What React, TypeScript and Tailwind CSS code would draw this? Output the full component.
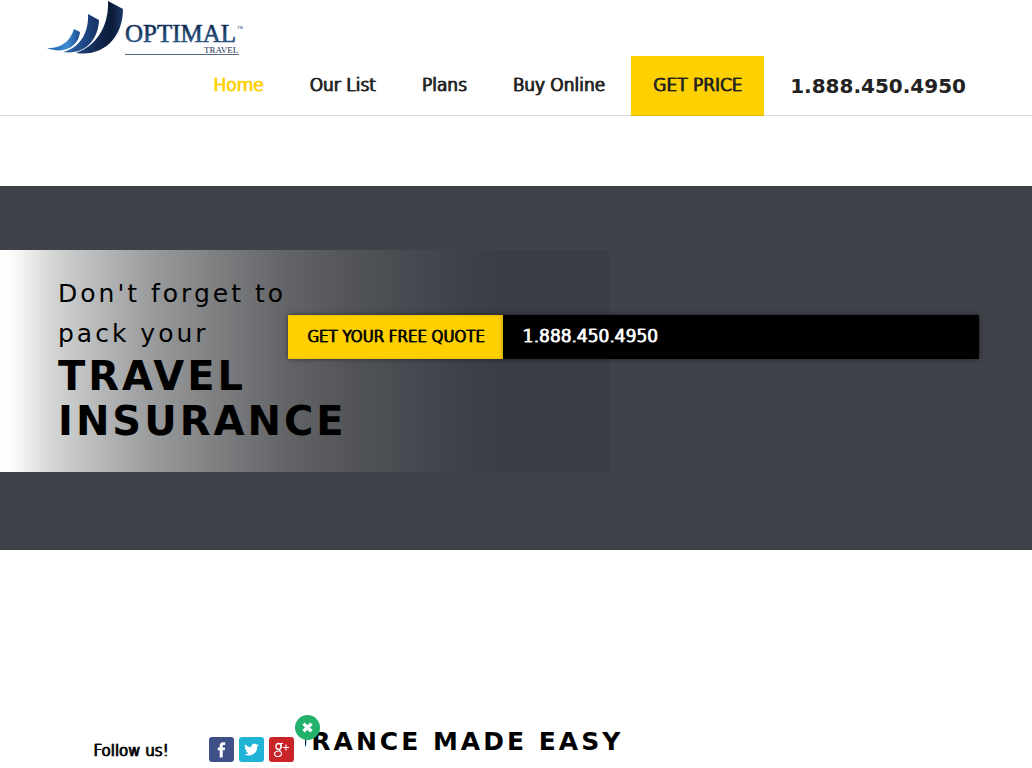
import React from "react";

const navItems = [
  { label: "Home", active: true },
  { label: "Our List", active: false },
  { label: "Plans", active: false },
  { label: "Buy Online", active: false },
];

const Logo = () => {
  return (
    <svg width="200" height="56" viewBox="0 0 200 56" role="img" aria-label="Optimal Travel">
      <defs>
        <linearGradient id="bar1" x1="0" x2="1">
          <stop offset="0" stopColor="#1c5fa8" />
          <stop offset="0.6" stopColor="#3d8bd0" />
          <stop offset="1" stopColor="#1a4f92" />
        </linearGradient>
        <linearGradient id="bar2" x1="0" x2="1">
          <stop offset="0" stopColor="#2d6cb4" />
          <stop offset="1" stopColor="#152f63" />
        </linearGradient>
        <linearGradient id="bar3" x1="0" x2="1">
          <stop offset="0" stopColor="#1d4079" />
          <stop offset="0.75" stopColor="#0b1a38" />
          <stop offset="1" stopColor="#1d3866" />
        </linearGradient>
        <linearGradient id="word" x1="0" x2="0" y1="0" y2="1">
          <stop offset="0.2" stopColor="#0d1d3c" />
          <stop offset="0.8" stopColor="#2c5f92" />
        </linearGradient>
      </defs>
      <path d="M1 48 C14 49 24 42 28 29 L34 32 C33 46 18 55 1 48Z" fill="url(#bar1)" />
      <path d="M17 52 C33 48 43 34 42 14 L53 20 C52 42 37 55 17 52Z" fill="url(#bar2)" />
      <path d="M30 53 C50 46 63 27 62 1 L77 9 C77 37 58 57 30 53Z" fill="url(#bar3)" />
      <text x="79" y="42" fontSize="25" fontFamily="Liberation Serif, serif" fill="url(#word)" stroke="#1f4673" strokeWidth="0.6">
        OPTIMAL
      </text>
      <text x="191" y="29" fontSize="4" fontFamily="Liberation Sans, sans-serif" fill="#1b3358">
        TM
      </text>
      <path d="M79 54.5H193" stroke="#5a6c85" />
      <text x="158" y="53" fontSize="9" fontFamily="Liberation Serif, serif" fill="#1b3358">
        TRAVEL
      </text>
    </svg>
  );
};

const App = () => {
  return (
    <div className="min-h-screen overflow-hidden bg-white font-['DejaVu_Sans',sans-serif] text-black">
      {/* Header section */}
      <header className="shadow-[inset_0_-1px_0_#dcdcdc]">
        <a href="#home" className="block w-fit ml-[46px]">
          <Logo />
        </a>
        <nav className="flex h-[60px] items-center justify-end pr-[66px] text-[17px] text-[#222] font-['DejaVu_Sans_Light','DejaVu_Sans',sans-serif] font-bold">
          <ul className="flex gap-[46px] mr-[26px] [text-shadow:1px_0_0_currentColor]">
            {navItems.map((item) => (
              <li key={item.label}>
                <a href="#nav" className={item.active ? "text-[#fdd000]" : ""}>
                  {item.label}
                </a>
              </li>
            ))}
          </ul>
          <button className="h-[60px] px-[22px] bg-[#ffd000] border-b border-[#dfb600] [text-shadow:1px_0_0_currentColor]">
            GET PRICE
          </button>
          <a href="tel:18884504950" className="ml-[26px] text-xl font-['DejaVu_Sans',sans-serif]">
            1.888.450.4950
          </a>
        </nav>
      </header>

      {/* Hero section */}
      <section className="mt-[70px] grid bg-[#40424a] border-y border-[#3a3d43] pt-[63px] pb-[77px]">
        <div className="[grid-area:1/1] w-[59%] pl-[58px] pt-6 pb-7 bg-[linear-gradient(to_right,#fff_0%,#fbfbfb_2%,#d2d3d3_9%,#b4b5b6_17%,#97989a_26%,#7d7e80_36%,#636467_47%,#535558_57%,#474a50_67%,#3f4148_76%,#3b3d44_83%,#3b3d44_100%)]">
          <h1 className="w-[300px]">
            <span className="block text-[25px] leading-[40px] tracking-[3px]">
              Don't forget to
              <br />
              pack your
            </span>
            <span className="block text-[40px] leading-[45px] tracking-[3px] font-bold">
              TRAVEL INSURANCE
            </span>
          </h1>
        </div>
        <div className="[grid-area:1/1] self-start flex h-11 mt-[65px] ml-[288px] mr-[53px] bg-black font-['DejaVu_Sans_Light','DejaVu_Sans',sans-serif] font-bold shadow-[0_0_5px_rgba(0,0,0,0.5)]">
          <button className="px-[19px] bg-[#ffd000] text-[15px] shadow-[inset_-2px_0_3px_rgba(0,0,0,0.15)] [text-shadow:1px_0_0_currentColor]">
            GET YOUR FREE QUOTE
          </button>
          <a
            href="tel:18884504950"
            className="self-center pl-[19px] text-[17px] text-white [text-shadow:1px_0_0_currentColor]"
          >
            1.888.450.4950
          </a>
        </div>
      </section>

      {/* Intro section */}
      <section className="mt-[172px] pl-[288px] h-[46px]">
        <h2 className="text-[25px] leading-[40px] tracking-[3px] font-bold whitespace-nowrap">
          URANCE MADE EASY
        </h2>
      </section>

      {/* Follow us bar */}
      <aside className="fixed bottom-0 left-[58px] flex w-[247px] h-10 items-start justify-between bg-white pl-[35px] pr-[11px] pt-[9px]">
        <p className="text-[15px] leading-7 font-['DejaVu_Sans_Light','DejaVu_Sans',sans-serif] font-bold [text-shadow:1px_0_0_currentColor]">
          Follow us!
        </p>
        <div className="flex gap-[5px]">
          <a href="#facebook" aria-label="Facebook">
            <svg width="25" height="25" viewBox="0 0 25 25">
              <rect width="25" height="25" rx="3" fill="#3f4f87" />
              <path d="M10.7 20.5v-7.2H8.8v-2.8h1.9V8.8c0-2.4 1.2-3.6 3.3-3.6h2.2V8h-1.4c-.8 0-1.1.4-1.1 1.1v1.4h2.4l-.3 2.8h-2.1v7.2z" fill="#fff" />
            </svg>
          </a>
          <a href="#twitter" aria-label="Twitter">
            <svg width="25" height="25" viewBox="0 0 25 25">
              <rect width="25" height="25" rx="3" fill="#1fb3d6" />
              <path
                transform="translate(5 5) scale(0.62)"
                d="M23.6 4.9c-.8.4-1.8.7-2.7.8 1-.6 1.7-1.5 2.1-2.6-.9.5-1.9.9-3 1.1A4.8 4.8 0 0 0 11.8 8.6C7.9 8.4 4.4 6.5 2 3.6a4.8 4.8 0 0 0 1.5 6.4c-.8 0-1.5-.2-2.2-.6 0 2.3 1.6 4.3 3.8 4.8-.7.2-1.4.2-2.1.1.6 1.9 2.4 3.3 4.5 3.3A9.6 9.6 0 0 1 .4 19.6a13.6 13.6 0 0 0 20.9-12c.9-.7 1.7-1.6 2.3-2.7z"
                fill="#fff"
              />
            </svg>
          </a>
          <a href="#google" aria-label="Google Plus">
            <svg width="25" height="25" viewBox="0 0 25 25" fill="none" stroke="#fff">
              <rect width="25" height="25" rx="3" fill="#c92428" stroke="none" />
              <ellipse cx="9.5" cy="9.5" rx="2.5" ry="3" strokeWidth="1.3" />
              <path d="M9.5 6.5H14M11.5 6.5C13 8.5 13 10.5 11 12C9 13.5 12.5 14 12.5 16.5C12.5 20.5 5.5 20.5 5.5 17C5.5 14.7 8 14 10.5 14" strokeWidth="1.1" />
              <path d="M14 10.5H20M17 7.5V13.5" strokeWidth="1.1" />
            </svg>
          </a>
        </div>
        <button aria-label="Close" className="absolute -top-[13px] -right-[15px] size-[25px] rounded-full bg-[#22b26b]">
          <svg width="25" height="25" viewBox="0 0 25 25" stroke="#fff" strokeWidth="3.4">
            <path d="M8.5 8.8L16.5 16.2M16.5 8.8L8.5 16.2" />
          </svg>
        </button>
      </aside>
    </div>
  );
};

export default App;
